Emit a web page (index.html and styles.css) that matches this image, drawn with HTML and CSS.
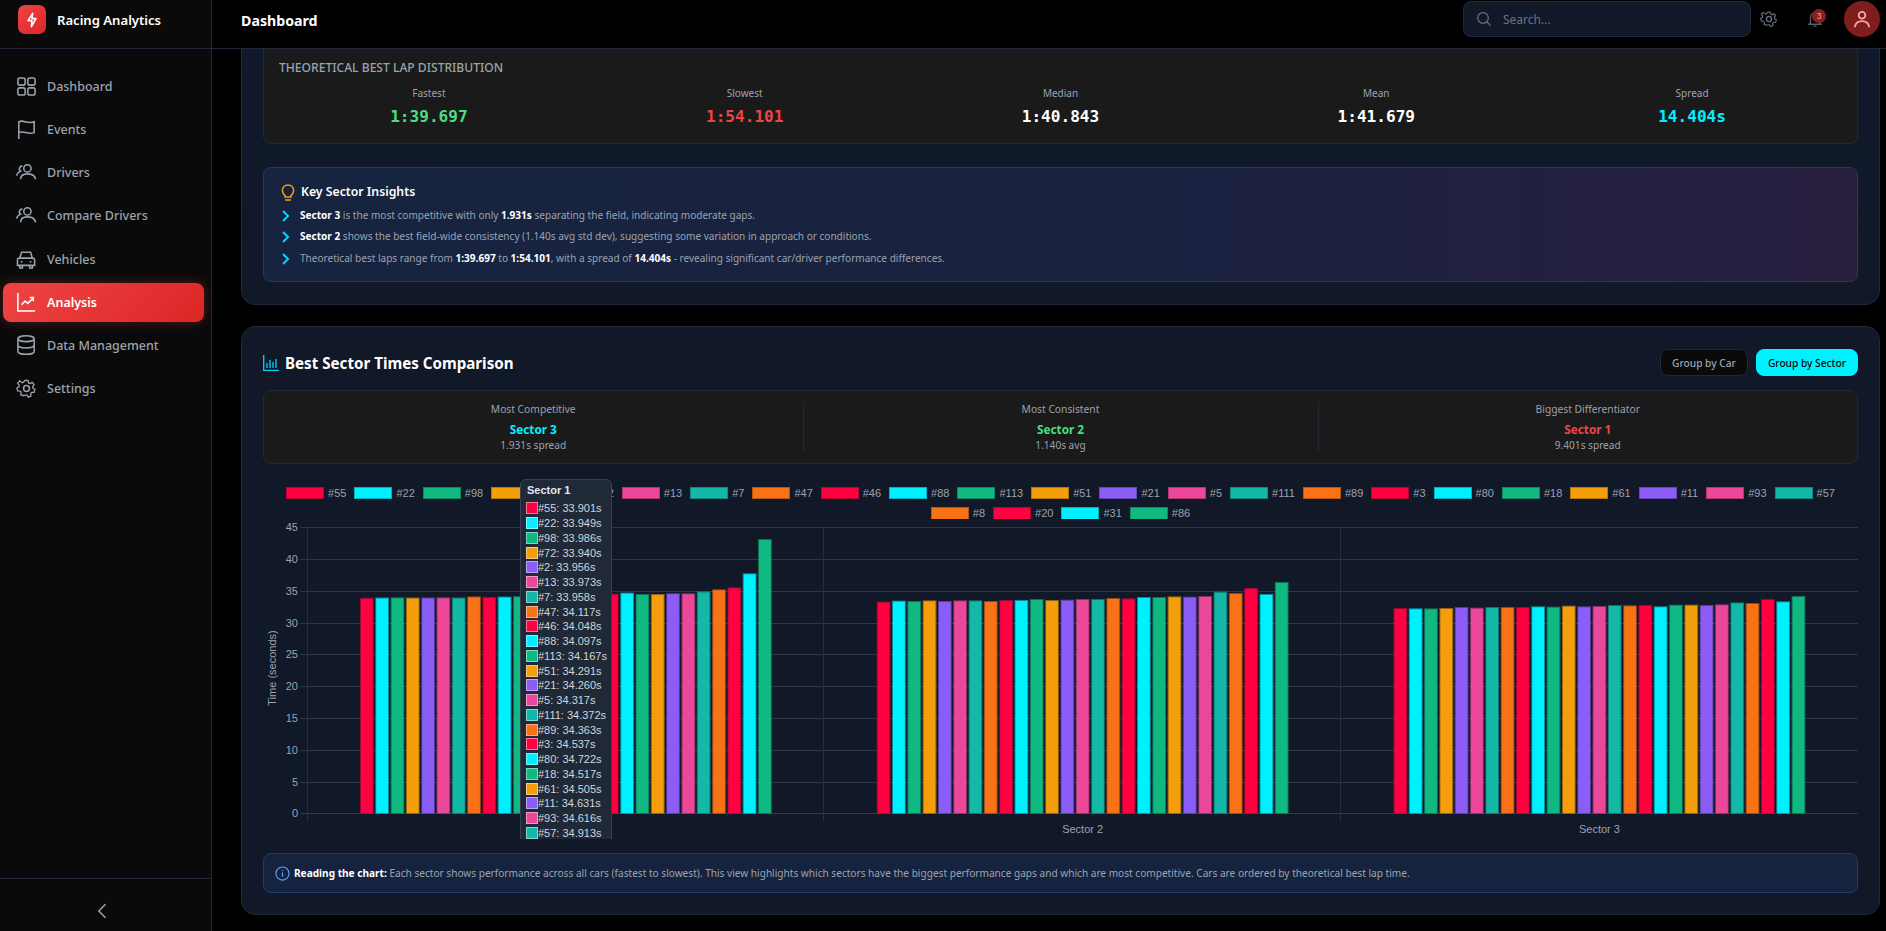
FILE: index.html
```html
<!DOCTYPE html>
<html lang="en">
<head>
<meta charset="utf-8">
<title>Racing Analytics</title>
<link rel="stylesheet" href="styles.css">
</head>
<body>
<div class="app">
  <aside class="sidebar">
    <div class="brand">
      <div class="logo"><svg width="16" height="16" viewBox="0 0 24 24" fill="none" stroke="#fff" stroke-width="2.4" stroke-linejoin="round"><path d="M13 2 6 13h6l-1 9 7-12h-6z"/></svg></div>
      <span class="brand-name">Racing Analytics</span>
    </div>
    <nav class="nav">
      <a class="nav-item"><svg class="nav-icon" viewBox="2 2 21 21"><rect x="3" y="3" width="8" height="8" rx="2"/><rect x="14" y="3" width="8" height="8" rx="2"/><rect x="3" y="14" width="8" height="8" rx="2"/><rect x="14" y="14" width="8" height="8" rx="2"/></svg>Dashboard</a>
      <a class="nav-item"><svg class="nav-icon" viewBox="2 2 21 21"><path d="M4 23V4c5-3 9 3 17 0v12c-7 3-12-3-17 0"/></svg>Events</a>
      <a class="nav-item"><svg class="nav-icon" viewBox="2 2 21 21"><circle cx="13.5" cy="8" r="4"/><path d="M6 20c0-4 3-6 7.5-6s8.500 2 9 6M8 5.500a3 3 0 0 0-2 5.500c-2.500 1-4 3-4.500 5"/></svg>Drivers</a>
      <a class="nav-item"><svg class="nav-icon" viewBox="2 2 21 21"><circle cx="13.5" cy="8" r="4"/><path d="M6 20c0-4 3-6 7.5-6s8.500 2 9 6M8 5.500a3 3 0 0 0-2 5.500c-2.500 1-4 3-4.500 5"/></svg>Compare Drivers</a>
      <a class="nav-item"><svg class="nav-icon" viewBox="2 2 21 21"><path d="M5 11l2-6.500h10l2 6.500M4 11h16a2 2 0 0 1 1.500 2v6h-19v-6a2 2 0 0 1 1.500-2zM5 19v3h3v-3M16 19v3h3v-3M6 15h2M16 15h2"/></svg>Vehicles</a>
      <a class="nav-item is-active"><svg class="nav-icon" viewBox="2 2 21 21"><path d="M3 2v20h19M7 15l4-4 3 2.500 6-6M16 7h4v4"/></svg>Analysis</a>
      <a class="nav-item"><svg class="nav-icon" viewBox="2 2 21 21"><ellipse cx="12" cy="5" rx="9" ry="3.2"/><path d="M3 5v14c0 1.800 4 3.200 9 3.200s9-1.400 9-3.200V5M3 12c0 1.800 4 3.200 9 3.200s9-1.400 9-3.200"/></svg>Data Management</a>
      <a class="nav-item"><svg class="nav-icon" viewBox="1 1 22 22"><use href="#gear"/></svg>Settings</a>
    </nav>
    <div class="collapse"><svg width="20" height="20" viewBox="0 0 24 24" fill="none" stroke="#9ca3af" stroke-width="1.800"><path d="M15 4l-8 8 8 8"/></svg></div>
  </aside>

  <div class="column">
    <header class="topbar">
      <h1 class="page-title">Dashboard</h1>
      <div class="search">
        <svg width="16" height="16" viewBox="0 0 24 24" fill="none" stroke="#6b7280" stroke-width="1.8"><circle cx="10.5" cy="10.5" r="8"/><path d="M16.5 16.5 22 22"/></svg>
        <span>Search...</span>
      </div>
      <button class="icon-btn gear-btn"><svg width="18" height="18" viewBox="0 0 24 24" fill="none" stroke="#6b7280" stroke-width="1.7"><g id="gear"><path d="M10 2h4l.7 3.200 2 .9 2.800-1.700 2.500 3-2 2.500.3 2.200 2.700 1.600-1 3.800-3.200.2-1.400 1.700.5 3.200-3.600 1.300-1.800-2.700h-2.200L8 22l-3.600-1.300.5-3.200-1.400-1.700-3.200-.2-1-3.800 2.700-1.600.3-2.200-2-2.500 2.500-3L5.100 4.100l2 .9L10 2z" transform="translate(1.500 1) scale(.88)"/><circle cx="12" cy="12" r="3.4"/></g></svg></button>
      <button class="icon-btn bell-btn">
        <svg width="18" height="18" viewBox="0 0 24 24" fill="none" stroke="#566070" stroke-width="1.7"><path d="M6 17V10a6 6 0 0 1 12 0v7l2 2H4zM10 21.500h4"/></svg>
        <span class="badge">3</span>
      </button>
      <div class="avatar"><svg width="20" height="20" viewBox="0 0 24 24" fill="none" stroke="#f4a6a6" stroke-width="2.2" stroke-linecap="round"><circle cx="12" cy="7.5" r="4"/><path d="M3.500 21c1-5 4-6.500 8.500-6.500s7.500 1.500 8.500 6.500"/></svg></div>
    </header>

    <main class="main">
      <section class="panel panel-top">
        <div class="dist">
          <h3 class="dist-title">THEORETICAL BEST LAP DISTRIBUTION</h3>
          <div class="dist-grid">
            <div class="dist-cell"><div class="dist-label">Fastest</div><div class="dist-value green">1:39.697</div></div>
            <div class="dist-cell"><div class="dist-label">Slowest</div><div class="dist-value red">1:54.101</div></div>
            <div class="dist-cell"><div class="dist-label">Median</div><div class="dist-value white">1:40.843</div></div>
            <div class="dist-cell"><div class="dist-label">Mean</div><div class="dist-value white">1:41.679</div></div>
            <div class="dist-cell"><div class="dist-label">Spread</div><div class="dist-value cyan">14.404s</div></div>
          </div>
        </div>
        <div class="insights">
          <h4 class="insights-title"><svg width="16" height="18" viewBox="0 0 20 24" fill="none" stroke="#f59e0b" stroke-width="2"><path d="M6 16.500c-2-1.500-3.500-3.500-3.500-6.500a7.500 7.500 0 0 1 15 0c0 3-1.500 5-3.500 6.500v2H6zM6 22.500h8"/></svg>Key Sector Insights</h4>
          <ul class="insights-list">
            <li><svg class="chev" viewBox="0 0 10 14"><path d="M2 2l5 5-5 5"/></svg><span><b>Sector 3</b> is the most competitive with only <b>1.931s</b> separating the field, indicating moderate gaps.</span></li>
            <li><svg class="chev" viewBox="0 0 10 14"><path d="M2 2l5 5-5 5"/></svg><span><b>Sector 2</b> shows the best field-wide consistency (1.140s avg std dev), suggesting some variation in approach or conditions.</span></li>
            <li><svg class="chev" viewBox="0 0 10 14"><path d="M2 2l5 5-5 5"/></svg><span>Theoretical best laps range from <b>1:39.697</b> to <b>1:54.101</b>, with a spread of <b>14.404s</b> - revealing significant car/driver performance differences.</span></li>
          </ul>
        </div>
      </section>

      <section class="panel panel-chart">
        <div class="chart-head">
          <h2 class="chart-title"><svg width="16" height="16" viewBox="0 0 16 16" fill="none" stroke="#00d4ff" stroke-width="1.3"><path d="M.7 0v15.300H16M4 8v5M7 5v8M10 7v6M13 4v9"/></svg>Best Sector Times Comparison</h2>
          <div class="group-btns">
            <button class="group-btn">Group by Car</button>
            <button class="group-btn is-on">Group by Sector</button>
          </div>
        </div>
        <div class="summary">
          <div class="summary-cell"><div class="summary-label">Most Competitive</div><div class="summary-value cyan">Sector 3</div><div class="summary-sub">1.931s spread</div></div>
          <div class="summary-cell summary-mid"><div class="summary-label">Most Consistent</div><div class="summary-value green">Sector 2</div><div class="summary-sub">1.140s avg</div></div>
          <div class="summary-cell"><div class="summary-label">Biggest Differentiator</div><div class="summary-value red">Sector 1</div><div class="summary-sub">9.401s spread</div></div>
        </div>

        <div class="chart" id="chart">
          <div class="legend">
            <div class="legend-row">
              <span class="lg"><i class="box c0"></i>#55</span><span class="lg"><i class="box c1"></i>#22</span><span class="lg"><i class="box c2"></i>#98</span><span class="lg"><i class="box c3"></i>#72</span><span class="lg"><i class="box c4"></i>#2</span><span class="lg"><i class="box c5"></i>#13</span><span class="lg"><i class="box c6"></i>#7</span><span class="lg"><i class="box c7"></i>#47</span><span class="lg"><i class="box c0"></i>#46</span><span class="lg"><i class="box c1"></i>#88</span><span class="lg"><i class="box c2"></i>#113</span><span class="lg"><i class="box c3"></i>#51</span><span class="lg"><i class="box c4"></i>#21</span><span class="lg"><i class="box c5"></i>#5</span><span class="lg"><i class="box c6"></i>#111</span><span class="lg"><i class="box c7"></i>#89</span><span class="lg"><i class="box c0"></i>#3</span><span class="lg"><i class="box c1"></i>#80</span><span class="lg"><i class="box c2"></i>#18</span><span class="lg"><i class="box c3"></i>#61</span><span class="lg"><i class="box c4"></i>#11</span><span class="lg"><i class="box c5"></i>#93</span><span class="lg"><i class="box c6"></i>#57</span>
            </div>
            <div class="legend-row legend-row-cut">
              <span class="lg"><i class="box c7"></i>#8</span><span class="lg"><i class="box c0"></i>#20</span><span class="lg"><i class="box c1"></i>#31</span><span class="lg"><i class="box c2"></i>#86</span>
            </div>
          </div>
          <svg class="plot" id="plot" width="1595" height="320" viewBox="263 519 1595 320"></svg>
          <div class="tooltip">
            <div class="tip-title">Sector 1</div>
            <div class="tip-row"><i class="swatch c0"></i>#55: 33.901s</div>
            <div class="tip-row"><i class="swatch c1"></i>#22: 33.949s</div>
            <div class="tip-row"><i class="swatch c2"></i>#98: 33.986s</div>
            <div class="tip-row"><i class="swatch c3"></i>#72: 33.940s</div>
            <div class="tip-row"><i class="swatch c4"></i>#2: 33.956s</div>
            <div class="tip-row"><i class="swatch c5"></i>#13: 33.973s</div>
            <div class="tip-row"><i class="swatch c6"></i>#7: 33.958s</div>
            <div class="tip-row"><i class="swatch c7"></i>#47: 34.117s</div>
            <div class="tip-row"><i class="swatch c0"></i>#46: 34.048s</div>
            <div class="tip-row"><i class="swatch c1"></i>#88: 34.097s</div>
            <div class="tip-row"><i class="swatch c2"></i>#113: 34.167s</div>
            <div class="tip-row"><i class="swatch c3"></i>#51: 34.291s</div>
            <div class="tip-row"><i class="swatch c4"></i>#21: 34.260s</div>
            <div class="tip-row"><i class="swatch c5"></i>#5: 34.317s</div>
            <div class="tip-row"><i class="swatch c6"></i>#111: 34.372s</div>
            <div class="tip-row"><i class="swatch c7"></i>#89: 34.363s</div>
            <div class="tip-row"><i class="swatch c0"></i>#3: 34.537s</div>
            <div class="tip-row"><i class="swatch c1"></i>#80: 34.722s</div>
            <div class="tip-row"><i class="swatch c2"></i>#18: 34.517s</div>
            <div class="tip-row"><i class="swatch c3"></i>#61: 34.505s</div>
            <div class="tip-row"><i class="swatch c4"></i>#11: 34.631s</div>
            <div class="tip-row"><i class="swatch c5"></i>#93: 34.616s</div>
            <div class="tip-row"><i class="swatch c6"></i>#57: 34.913s</div>
          </div>
        </div>

        <div class="note">
          <svg width="15" height="15" viewBox="0 0 16 16" fill="none" stroke="#60a5fa" stroke-width="1.2"><circle cx="8" cy="8" r="7"/><path d="M8 7v4.500M8 4.200v1.200"/></svg>
          <span><b>Reading the chart:</b> Each sector shows performance across all cars (fastest to slowest). This view highlights which sectors have the biggest performance gaps and which are most competitive. Cars are ordered by theoretical best lap time.</span>
        </div>
      </section>
    </main>
  </div>
</div>
<script src="chart.js"></script>
</body>
</html>
```
FILE: styles.css
```css
* { box-sizing: border-box; }
html, body { margin: 0; height: 100%; overflow: hidden; }
body { background: #000; color: #fff; font-family: "Noto Sans", "Open Sans", sans-serif; }
h1, h2, h3, h4, ul { margin: 0; padding: 0; }
b { color: #fff; font-weight: 700; }

.app { display: flex; height: 931px; }

/* sidebar */
.sidebar { width: 212px; flex: none; display: flex; flex-direction: column; background: #0a0a0a; border-right: 1px solid #1f2937; }
.brand { height: 49px; flex: none; display: flex; align-items: center; gap: 11px; padding: 0 0 9px 18px; border-bottom: 1px solid #1f2937; }
.logo { width: 28px; height: 29px; display: flex; align-items: center; justify-content: center; border-radius: 7px; background: linear-gradient(135deg, #ef4444, #dc2626); }
.brand-name { font-size: 13.1px; font-weight: 600; color: #fff; }
.nav { flex: 1; padding: 18px 7px 0 3px; display: flex; flex-direction: column; gap: 4.15px; }
.nav-item { height: 39px; display: flex; align-items: center; gap: 11px; padding-left: 14px; border-radius: 8px; color: #9ca3af; font-size: 12.5px; font-weight: 500; }
.nav-icon { width: 19px; height: 19px; flex: none; fill: none; stroke: #9ca3af; stroke-width: 1.7; overflow: visible; }
.nav-item.is-active { color: #fff; font-weight: 600; background: linear-gradient(135deg, #ef4444, #dc2626); box-shadow: 0 0 12px rgba(239, 68, 68, .3); }
.is-active .nav-icon { stroke: #fff; }
.collapse { height: 53px; flex: none; display: flex; align-items: center; justify-content: center; border-top: 1px solid #1f2937; padding: 12px 5px 0 0; }

/* top bar */
.column { flex: 1; min-width: 0; display: flex; flex-direction: column; }
.topbar { height: 49px; flex: none; display: flex; align-items: center; padding: 0 6px 10px 29px; border-bottom: 1px solid #1f2937; background: #000; }
.page-title { font-size: 14.2px; font-weight: 700; margin: 2px auto 0 0; }
.search { width: 288px; height: 36px; display: flex; align-items: center; gap: 11px; padding-left: 12px; background: #111827; border: 1px solid #1f2937; border-radius: 8px; color: #6b7280; font-size: 12px; }
.icon-btn { position: relative; width: 18px; height: 18px; padding: 0; border: 0; background: none; display: flex; }
.gear-btn { margin-left: 9px; }
.bell-btn { margin-left: 28px; }
.badge { position: absolute; top: -1px; left: 6px; width: 14px; height: 14px; border-radius: 50%; background: #8b2020; color: #f4a6a6; font-size: 8.5px; line-height: 14px; text-align: center; }
.avatar { width: 36px; height: 36px; margin-left: 20px; border-radius: 50%; background: #7f1d1d; display: flex; align-items: center; justify-content: center; }

/* main */
.main { flex: 1; min-height: 0; overflow: hidden; padding: 0 6px 0 29px; display: flex; flex-direction: column; gap: 21px; }
.panel { flex: none; background: #111827; border: 1px solid #1f2937; border-radius: 14px; padding: 0 21px; }
.panel-top { margin-top: -21px; padding-bottom: 22px; background: linear-gradient(180deg, #101a2c, #111827); }
.panel-chart { height: 589px; padding-top: 22px; }

.dist { height: 115px; background: #1a1a1a; border: 1px solid #1f2937; border-radius: 8px; padding: 28px 15px 0; }
.dist-title { font-size: 12.1px; font-weight: 500; color: #9ca3af; line-height: 20px; }
.dist-grid { display: grid; grid-template-columns: repeat(5, 1fr); gap: 16px; margin-top: 7px; }
.dist-cell { text-align: center; }
.dist-label { font-size: 10px; line-height: 16px; color: #9ca3af; }
.dist-value { font-family: "DejaVu Sans Mono", monospace; font-size: 16.1px; font-weight: 700; line-height: 24px; margin-top: 4px; }
.green { color: #4ade80; }
.red { color: #ef4444; }
.white { color: #fff; }
.cyan { color: #00f0ff; }

.insights { height: 115px; margin-top: 23px; padding: 14px 16px; border: 1px solid #1e3a6f; border-radius: 8px; background: linear-gradient(90deg, #16243f, #1b2140 60%, #281e3e); }
.insights-title { display: flex; align-items: center; gap: 5px; font-size: 12.25px; font-weight: 600; color: #fff; line-height: 20px; }
.insights-list { list-style: none; margin-top: 2px; }
.insights-list li { display: flex; align-items: center; gap: 9px; height: 21.5px; font-size: 10.05px; color: #9ca3af; padding-left: 1px; }
.chev { width: 10px; height: 14px; flex: none; margin-top: 2px; fill: none; stroke: #00d4ff; stroke-width: 2; }

/* chart panel */
.chart-head { height: 27px; display: flex; align-items: center; justify-content: space-between; }
.chart-title { display: flex; align-items: center; gap: 6px; font-size: 15.15px; font-weight: 700; color: #fff; }
.group-btns { display: flex; gap: 8px; }
.group-btn { height: 27px; padding: 0 11px; border-radius: 8px; border: 1px solid #1f2937; background: #0a0a0a; color: #9ca3af; font: 500 10.2px "Noto Sans", sans-serif; }
.group-btn.is-on { background: #00f0ff; border-color: #00f0ff; color: #0a0a0a; }

.summary { height: 74px; margin-top: 14px; display: flex; padding: 11px 0; background: #1a1a1a; border: 1px solid #1f2937; border-radius: 8px; text-align: center; }
.summary-cell { flex: 1; }
.summary-mid { flex: 0 0 516px; border-left: 1px solid #1f2937; border-right: 1px solid #1f2937; }
.summary-label { font-size: 10.25px; line-height: 14px; color: #9ca3af; }
.summary-value { font-size: 11.8px; font-weight: 700; line-height: 18px; margin-top: 4px; }
.summary-sub { font-size: 10.1px; line-height: 14px; color: #9ca3af; }

.chart { position: relative; height: 375px; overflow: hidden; font-family: "Liberation Sans", Arial, sans-serif; }
.legend { height: 56px; padding-top: 23px; }
.legend-row { height: 20px; display: flex; justify-content: center; gap: 8px; font-size: 11px; line-height: 12px; color: #9ca3af; }
.lg { display: flex; height: 12px; align-items: center; }
.box { width: 38px; height: 12px; margin-right: 4px; border: 1px solid rgba(0, 0, 0, .25); }
.legend-row-cut .box { border-bottom: 0; }
.c0 { background: #ff0040; }
.c1 { background: #00f0ff; }
.c2 { background: #10b981; }
.c3 { background: #f59e0b; }
.c4 { background: #8b5cf6; }
.c5 { background: #ec4899; }
.c6 { background: #14b8a6; }
.c7 { background: #f97316; }
.plot { position: absolute; left: 0; top: 55px; display: block; }

.tooltip { position: absolute; left: 257px; top: 15px; width: 92px; padding: 2px 5px 0; height: 380px; background: #1f2937; border: 1px solid #374151; border-radius: 6px; color: #d1d5db; font-size: 11px; }
.tip-title { font-weight: 700; line-height: 16px; height: 19px; padding-left: 1px; color: #e5e7eb; }
.tip-row { display: flex; align-items: center; height: 14.75px; white-space: nowrap; }
.swatch { width: 12px; height: 12px; flex: none; border: 1px solid rgba(255, 255, 255, .45); }

.note { height: 40px; margin-top: 14px; display: flex; align-items: center; gap: 4px; padding: 0 11px; background: #15233e; border: 1px solid #1e3a6f; border-radius: 8px; font-size: 10.1px; color: #9ca3af; }
```
FILE: chart.js
```js
// Draws the bars, grid and axis labels of the sector comparison chart.
var colors = ['#ff0040', '#00f0ff', '#10b981', '#f59e0b', '#8b5cf6', '#ec4899', '#14b8a6', '#f97316'];
var sector1 = [33.901, 33.949, 33.986, 33.940, 33.956, 33.973, 33.958, 34.117, 34.048, 34.097, 34.167, 34.291, 34.260, 34.317, 34.372, 34.363, 34.537, 34.722, 34.517, 34.505, 34.631, 34.616, 34.913, 35.24, 35.56, 37.76, 43.15];
var top2 = [395, 392, 393, 391, 393, 391, 391, 393, 390, 390, 387, 390, 389, 387, 387, 384, 385, 381, 381, 379, 380, 378, 365, 369, 354, 372, 336].map(function (y) { return 470 + y / 3; });
var top3 = [144, 145, 145, 144, 141, 143, 141, 141, 141, 139, 140, 137, 139, 138, 135, 136, 135, 139, 134, 134, 135, 133, 127, 129, 117, 124, 108].map(function (y) { return 560 + y / 3; });

var zeroY = 813.3, unit = 31.78 / 5, left = 307.5, right = 1857.8;
var top1 = sector1.map(function (v) { return zeroY - v * unit; });
var groups = [top1, top2, top3];
var catW = (right - left) / 3;
var out = [];

function line(x1, y1, x2, y2, color) {
  out.push('<line x1="' + x1 + '" y1="' + y1 + '" x2="' + x2 + '" y2="' + y2 + '" stroke="' + color + '"/>');
}
function label(x, y, text, anchor, extra) {
  out.push('<text x="' + x + '" y="' + y + '" text-anchor="' + anchor + '" fill="#9ca3af" font-size="11" ' + (extra || '') + '>' + text + '</text>');
}

for (var t = 0; t <= 9; t++) {
  var y = Math.round(zeroY - t * 31.78);
  line(300, y + 0.5, right, y + 0.5, t === 0 ? '#333b49' : '#2f3746');
  label(298, y + 4, t * 5, 'end');
}
for (var c = 0; c < 3; c++) {
  var x = Math.round(left + c * catW) - 0.5;
  line(x, 527, x, 821, '#272f3d');
}
label(0, 0, 'Time (seconds)', 'middle', 'transform="translate(276 668) rotate(-90)"');
label(left + catW * 0.5, 833, 'Sector 1', 'middle');
label(left + catW * 1.5, 833, 'Sector 2', 'middle');
label(left + catW * 2.5, 833, 'Sector 3', 'middle');

groups.forEach(function (tops, g) {
  var start = left + g * catW + catW * 0.1;
  var pitch = catW * 0.8 / 27;
  tops.forEach(function (topY, i) {
    var bx = start + i * pitch + pitch * 0.05;
    var bw = pitch * 0.9;
    var col = colors[i % 8];
    out.push('<rect x="' + bx + '" y="' + topY + '" width="' + bw + '" height="' + (zeroY - topY) + '" fill="' + col + '" fill-opacity="0.55"/>');
    out.push('<rect x="' + (bx + 1) + '" y="' + (topY + 1) + '" width="' + (bw - 2) + '" height="' + (zeroY - topY - 1) + '" fill="' + col + '"/>');
  });
});

document.getElementById('plot').innerHTML = out.join('');
```
